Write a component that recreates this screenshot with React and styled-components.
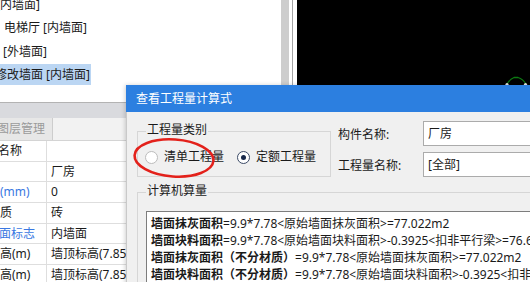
import React from "react";
import styled, { createGlobalStyle } from "styled-components";

const GlobalStyle = createGlobalStyle`
  html, body {
    margin: 0;
    padding: 0;
    background: #fff;
  }
  body {
    font-family: "Noto Sans", "Noto Sans CJK SC", sans-serif;
    font-size: 12px;
    color: #1a1a1a;
  }
`;

const Screen = styled.div`
  position: relative;
  width: 530px;
  height: 282px;
  overflow: hidden;
  display: flex;
`;

const LeftPane = styled.div`
  width: 297px;
  flex-shrink: 0;
  display: flex;
  flex-direction: column;
  background: #fff;
`;

const TreeArea = styled.div`
  height: 102px;
  flex-shrink: 0;
  display: flex;
`;

const TreeList = styled.div`
  width: 281px;
  overflow: hidden;
`;

const TreeInner = styled.div`
  margin-top: -7px;
`;

const TreeRow = styled.div`
  height: 23.33px;
  display: flex;
  align-items: center;
`;

const TreeLabel = styled.span`
  margin-left: ${(p) => p.$indent}px;
  height: 21px;
  line-height: 21px;
  padding-right: 1px;
  white-space: nowrap;
  background: ${(p) => (p.$selected ? "#bbd6f3" : "transparent")};
`;

const ScrollTrack = styled.div`
  width: 8px;
  background: #cdcdcd;
`;

const Splitter = styled.div`
  width: 8px;
  background: linear-gradient(
    to right,
    #fff 3px,
    #a4a4a4 3px,
    #a4a4a4 4px,
    #fff 4px
  );
`;

const PropPanel = styled.div`
  flex: 1;
  border-top: 1px solid #b3b3b3;
  display: flex;
  flex-direction: column;
`;

const PanelBand = styled.div`
  height: 15px;
  background: #d9dade;
`;

const TabStrip = styled.div`
  height: 22px;
  display: flex;
  background: #f2f2f2;
  border-bottom: 1px solid #d4d4d4;
`;

const Tab = styled.div`
  width: 52px;
  background: #e7e7e7;
  border-right: 1px solid #cdcdcd;
  color: #9a9a9a;
  line-height: 22px;
  white-space: nowrap;
  overflow: hidden;

  span {
    margin-left: -3px;
  }
`;

const PropRow = styled.div`
  display: grid;
  grid-template-columns: 47px 1fr;
  height: 20.67px;
  box-sizing: border-box;
  border-bottom: 1px solid #dedede;
  line-height: 19px;
`;

const PropKey = styled.div`
  border-right: 1px solid #dedede;
  overflow: hidden;
  white-space: nowrap;
  color: ${(p) => (p.$link ? "#3a78e2" : "#1a1a1a")};

  span {
    margin-left: ${(p) => p.$shift || 0}px;
  }
`;

const PropValue = styled.div`
  padding-left: 4px;
  white-space: nowrap;
  overflow: hidden;
`;

const Canvas = styled.div`
  flex: 1;
  position: relative;
  background: #000;
`;

const WireMark = styled.svg`
  position: absolute;
  left: 207px;
  top: 75px;
`;

const Dialog = styled.div`
  position: absolute;
  left: 126px;
  top: 85px;
  width: 420px;
  height: 210px;
  background: #f0f0f0;
  border-left: 1px solid #c9c9c9;
  box-shadow: -1px 0 4px rgba(0, 0, 0, 0.18);
`;

const TitleBar = styled.div`
  height: 27px;
  margin-left: -1px;
  padding-left: 10px;
  background: #2c7fe0;
  color: #fff;
  line-height: 27px;
`;

const Body = styled.div`
  position: relative;
  padding: 9px 0 0 10px;
`;

const TopRow = styled.div`
  display: flex;
  align-items: flex-start;
`;

const Group = styled.div`
  box-sizing: border-box;
  flex-shrink: 0;
  width: ${(p) => p.$width}px;
  height: ${(p) => p.$height}px;
  margin-top: ${(p) => p.$top}px;
  border: 1px solid #d6d6d6;
`;

const Legend = styled.div`
  width: fit-content;
  margin: -9px 0 0 8px;
  padding: 0 1px;
  line-height: 14px;
  background: #f0f0f0;
  white-space: nowrap;
`;

const RadioRow = styled.div`
  display: flex;
  align-items: center;
  margin-top: 12px;
  padding-left: 7px;
`;

const RadioOption = styled.label`
  display: flex;
  align-items: center;
  flex-shrink: 0;
  gap: 6px;
  margin-right: 13px;
  line-height: 16px;
  white-space: nowrap;
`;

const RadioCircle = styled.span`
  box-sizing: border-box;
  flex-shrink: 0;
  width: 13px;
  height: 13px;
  border-radius: 50%;
  background: #fff;
  border: 1px solid ${(p) => (p.$checked ? "#3b4a66" : "#bcbcbc")};
  display: grid;
  place-items: center;

  &::after {
    content: "";
    width: 5px;
    height: 5px;
    border-radius: 50%;
    background: ${(p) => (p.$checked ? "#17284a" : "transparent")};
  }
`;

const FieldGrid = styled.div`
  flex-shrink: 0;
  margin-left: 7px;
  display: grid;
  grid-template-columns: 85px 200px;
  row-gap: 6px;
  align-items: center;
  white-space: nowrap;
`;

const FieldInput = styled.div`
  box-sizing: border-box;
  height: 25px;
  padding-left: 4px;
  background: #fff;
  border: 1px solid #ababab;
  line-height: 23px;
`;

const FormulaBox = styled.div`
  box-sizing: border-box;
  width: 400px;
  height: 100px;
  margin: 13px 0 0 8px;
  padding: 3px 0 0 4px;
  background: #fff;
  border: 1px solid #7d7d7d;
  line-height: 17px;
  white-space: nowrap;
  overflow: hidden;

  b {
    font-weight: 700;
  }
`;

const Annotation = styled.svg`
  position: absolute;
  left: 4px;
  top: 24px;
  overflow: visible;
`;

const treeItems = [
  { text: "[内墙面]", indent: -4 },
  { text: "电梯厅 [内墙面]", indent: 4 },
  { text: "[外墙面]", indent: 3 },
  { text: "修改墙面 [内墙面]", indent: -5, selected: true },
];

const props = [
  { key: "名称", value: "", shift: -2 },
  { key: "", value: "厂房" },
  { key: "(mm)", value: "0", link: true },
  { key: "质", value: "砖" },
  { key: "面标志", value: "内墙面", link: true, shift: -1 },
  { key: "高(m)", value: "墙顶标高(7.85)" },
  { key: "高(m)", value: "墙顶标高(7.85)" },
];

const formulas = [
  ["墙面抹灰面积", "=9.9*7.78<原始墙面抹灰面积>=77.022m2"],
  ["墙面块料面积", "=9.9*7.78<原始墙面块料面积>-0.3925<扣非平行梁>=76.629m2"],
  ["墙面抹灰面积（不分材质）", "=9.9*7.78<原始墙面抹灰面积>=77.022m2"],
  ["墙面块料面积（不分材质）", "=9.9*7.78<原始墙面块料面积>-0.3925<扣非平行梁>=76.629m2"],
];

const App = () => {
  return (
    <>
      <GlobalStyle />
      <Screen>
        <LeftPane>
          <TreeArea>
            <TreeList>
              <TreeInner>
                {treeItems.map((item, i) => (
                  <TreeRow key={i}>
                    <TreeLabel $indent={item.indent} $selected={item.selected}>
                      {item.text}
                    </TreeLabel>
                  </TreeRow>
                ))}
              </TreeInner>
            </TreeList>
            <ScrollTrack />
            <Splitter />
          </TreeArea>
          <PropPanel>
            <PanelBand />
            <TabStrip>
              <Tab>
                <span>图层管理</span>
              </Tab>
            </TabStrip>
            {props.map((row, i) => (
              <PropRow key={i}>
                <PropKey $link={row.link} $shift={row.shift}>
                  <span>{row.key}</span>
                </PropKey>
                <PropValue>{row.value}</PropValue>
              </PropRow>
            ))}
          </PropPanel>
        </LeftPane>

        <Canvas>
          <WireMark width="26" height="11" viewBox="0 0 26 11">
            <path
              d="M3 9 Q6 4 10 2.5 L14 2.5 Q19 4 22 9"
              fill="none"
              stroke="#0c7a12"
              strokeWidth="1.3"
            />
            <circle cx="3" cy="9.5" r="1.6" fill="#e4e4e4" />
            <circle cx="21.5" cy="9.5" r="1.6" fill="#e4e4e4" />
          </WireMark>
        </Canvas>

        <Dialog>
          <TitleBar>查看工程量计算式</TitleBar>
          <Body>
            <TopRow>
              <Group $width={194} $height={46} $top={10}>
                <Legend>工程量类别</Legend>
                <RadioRow>
                  <RadioOption>
                    <RadioCircle />
                    清单工程量
                  </RadioOption>
                  <RadioOption>
                    <RadioCircle $checked />
                    定额工程量
                  </RadioOption>
                </RadioRow>
              </Group>
              <FieldGrid>
                <span>构件名称:</span>
                <FieldInput>厂房</FieldInput>
                <span>工程量名称:</span>
                <FieldInput>[全部]</FieldInput>
              </FieldGrid>
            </TopRow>

            <Group $width={420} $height={140} $top={15}>
              <Legend>计算机算量</Legend>
              <FormulaBox>
                {formulas.map(([name, expr], i) => (
                  <div key={i}>
                    <b>{name}</b>
                    {expr}
                  </div>
                ))}
              </FormulaBox>
            </Group>

            <Annotation width="86" height="44" viewBox="0 0 86 44">
              <ellipse
                cx="43"
                cy="22"
                rx="39.5"
                ry="18.5"
                fill="none"
                stroke="#e3211b"
                strokeWidth="2.6"
                transform="rotate(4 43 22)"
              />
            </Annotation>
          </Body>
        </Dialog>
      </Screen>
    </>
  );
};

export default App;
